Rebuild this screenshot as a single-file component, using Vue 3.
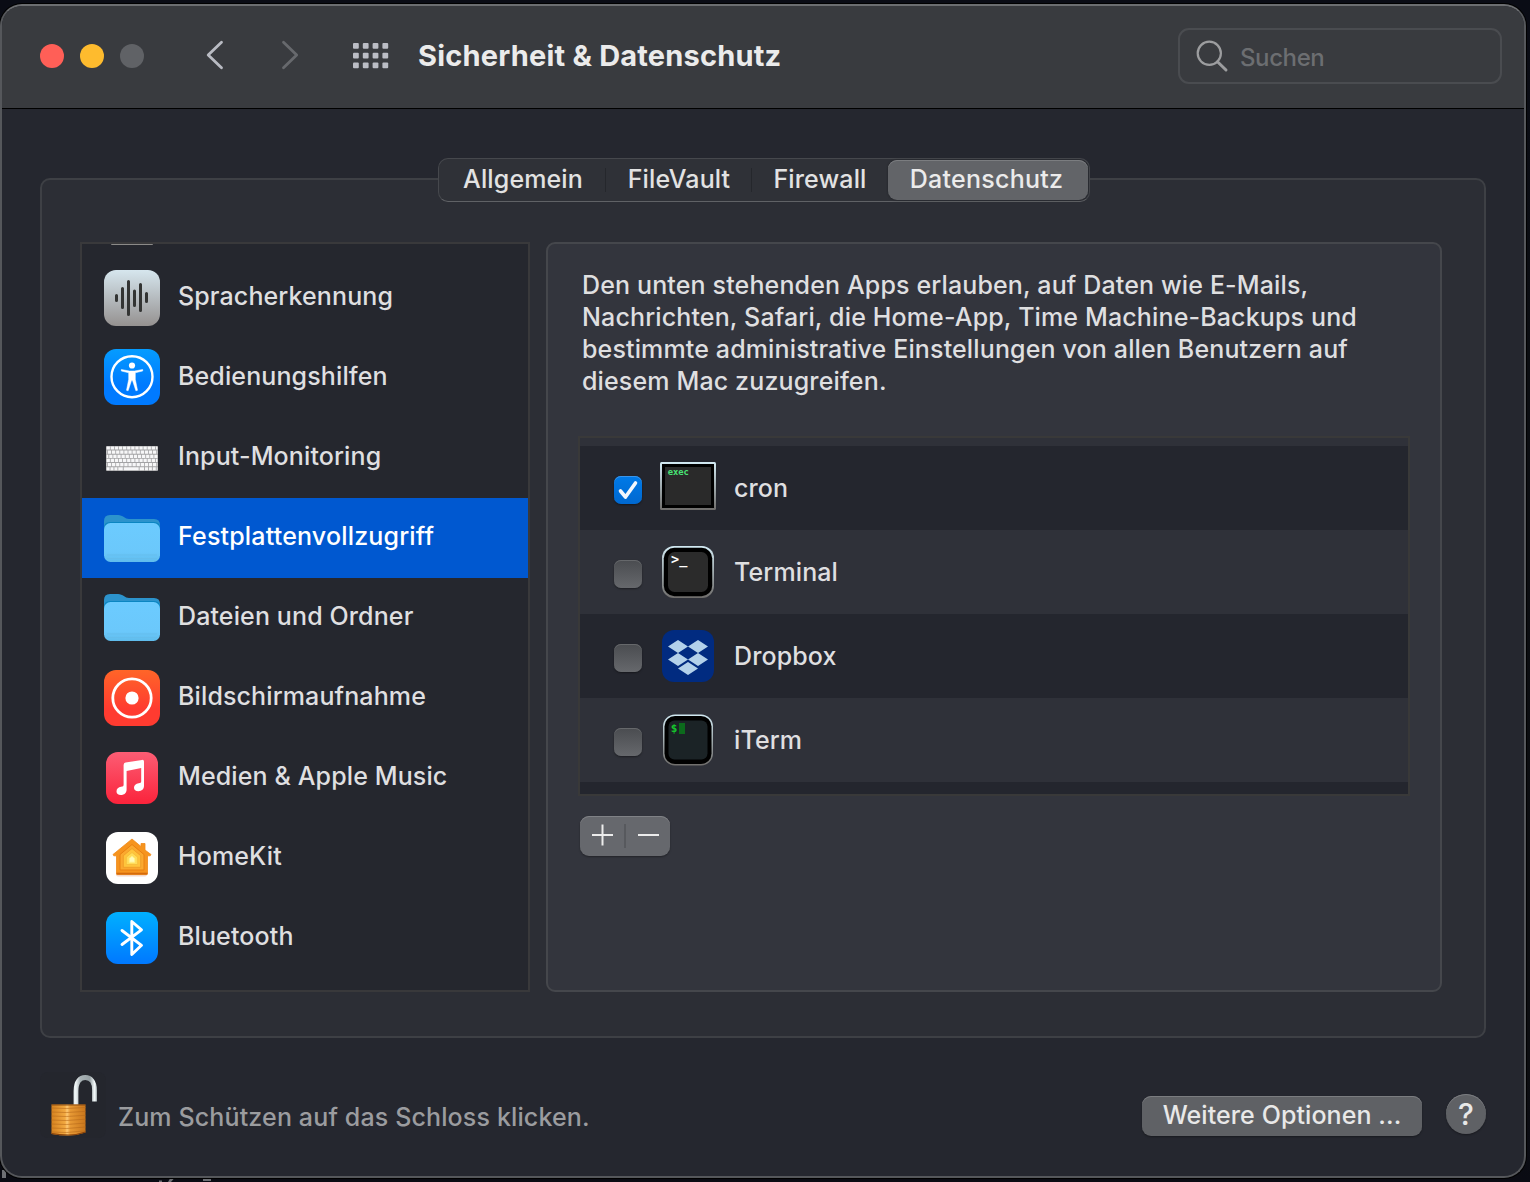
<script setup>
const tabs = [
  { label: 'Allgemein', cls: 'seg-a' },
  { label: 'FileVault', cls: 'seg-b' },
  { label: 'Firewall', cls: 'seg-c' },
  { label: 'Datenschutz', cls: 'seg-d' },
]

const categories = [
  { label: 'Spracherkennung', icon: 'speech' },
  { label: 'Bedienungshilfen', icon: 'access' },
  { label: 'Input-Monitoring', icon: 'keyboard' },
  { label: 'Festplattenvollzugriff', icon: 'folder', selected: true },
  { label: 'Dateien und Ordner', icon: 'folder' },
  { label: 'Bildschirmaufnahme', icon: 'record' },
  { label: 'Medien & Apple Music', icon: 'music' },
  { label: 'HomeKit', icon: 'home' },
  { label: 'Bluetooth', icon: 'bluetooth' },
]

const apps = [
  { label: 'cron', icon: 'cron', checked: true },
  { label: 'Terminal', icon: 'terminal' },
  { label: 'Dropbox', icon: 'dropbox' },
  { label: 'iTerm', icon: 'iterm' },
]

const keyRows = [0, 1, 2, 3, 4, 5]
const lockRibs = [0, 1, 2, 3, 4, 5, 6]
</script>

<template>
  <div class="desktop">
    <svg class="behind" width="240" height="14" viewBox="0 0 240 14" fill="#6d6f74">
      <rect x="2" y="2" width="4" height="8" />
      <path d="M159 12.5h3v1.5h-3zM170 10.5h4l-3 3.5h-3zM203 11h8v2h-8z" />
    </svg>
    <div class="window">
      <header class="toolbar">
        <div class="lights"><i class="red"></i><i class="yellow"></i><i class="gray"></i></div>
        <svg class="nav" width="100" height="32" viewBox="0 0 100 32" fill="none" stroke-width="2.8" stroke-linecap="round" stroke-linejoin="round">
          <path d="M17.500 3.200 4.200 16l13.300 12.800" stroke="#b9bbc3" />
          <path d="M79.500 3.200l13.200 12.800-13.200 12.800" stroke="#67696d" />
        </svg>
        <svg class="dots" width="36" height="26" viewBox="0 0 36 26" fill="#bbbdc5">
          <template v-for="r in 3" :key="r">
            <rect v-for="c in 4" :key="c" :x="(c - 1) * 9.8" :y="(r - 1) * 9.7" width="5.8" height="5.800" rx="1" />
          </template>
        </svg>
        <h1>Sicherheit &amp; Datenschutz</h1>
        <div class="search">
          <svg width="34" height="34" viewBox="0 0 34 34" fill="none" stroke="#9c9d9f">
            <circle cx="14.300" cy="14.300" r="11.600" stroke-width="2.200" />
            <path d="M22.500 22.700 31 31" stroke-width="3" stroke-linecap="round" />
          </svg>
          <span>Suchen</span>
        </div>
      </header>

      <main>
        <nav class="tabs">
          <button v-for="t in tabs" :key="t.label" :class="t.cls">{{ t.label }}</button>
        </nav>

        <section class="group">
          <ul class="sidebar">
            <li class="peek"><i></i></li>
            <li v-for="c in categories" :key="c.label" :class="{ selected: c.selected }">
              <svg width="56" height="80" viewBox="0 0 56 80">
                <g v-if="c.icon === 'speech'">
                  <rect y="12" width="56" height="56" rx="12" fill="url(#gSpeech)" />
                  <path d="M12.500 37.500v5M18.500 30.500v19M24.500 23.500v33M30.500 33v14.500M36.500 26.500v26M42.500 35.500v8" stroke="#333433" stroke-width="3" stroke-linecap="round" />
                </g>
                <g v-else-if="c.icon === 'access'">
                  <rect y="11" width="56" height="56" rx="12" fill="url(#gBlue)" />
                  <circle cx="28" cy="38.700" r="20.500" fill="none" stroke="#fff" stroke-width="2.400" />
                  <circle cx="28" cy="27.500" r="3.100" fill="#fff" />
                  <path d="M17.300 31.500 25.500 33h5l8.200-1.500v1.500L31.300 34.800v6.500l2.200 11-1.600.5-3.400-10.300h-1l-3.400 10.300-1.600-.5 2.200-11v-6.500L17.300 33z" fill="#fff" stroke="#fff" stroke-width=".5" stroke-linejoin="round" />
                </g>
                <g v-else-if="c.icon === 'keyboard'">
                  <rect x="2" y="28" width="52" height="25" rx="1" fill="#a3a3a5" />
                  <g stroke="#f7f7f8" stroke-width="3.200">
                    <path
                      v-for="r in keyRows"
                      :key="r"
                      :d="`M2.600 ${30 + r * 4.150}H53.500`"
                      :stroke-dasharray="r === 5 ? '3 .9 3 .9 3 .9 4.500 .9 15 .9 4.500 .9 3 .9 3 .9 3 .9' : '3.300 .8'"
                      :stroke-dashoffset="r === 5 ? 0 : -(r % 3) * 1.300"
                    />
                  </g>
                </g>
                <g v-else-if="c.icon === 'folder'">
                  <g :transform="c.selected ? 'translate(0 1)' : ''">
                    <path d="M0 30V22q0-6 6-6h8c5 0 7 4 11 4h25q6 0 6 6v4H0z" fill="#2c93cc" />
                    <path d="M0 29q0-6 6-6h44q6 0 6 6v4H0z" fill="#0c86c2" />
                    <rect y="24" width="56" height="39" rx="6.500" fill="url(#gFolder)" />
                    <path d="M3 56h50M3 59.500h50" stroke="#64bbe9" stroke-width=".7" />
                  </g>
                </g>
                <g v-else-if="c.icon === 'record'">
                  <rect y="12" width="56" height="56" rx="12" fill="url(#gRecord)" />
                  <circle cx="28" cy="40" r="19.200" fill="none" stroke="#fff" stroke-width="2.800" />
                  <circle cx="28" cy="40" r="6.600" fill="#fff" />
                </g>
                <g v-else-if="c.icon === 'music'">
                  <rect x="2" y="14" width="52" height="52" rx="12" fill="url(#gMusic)" />
                  <path d="M19.600 27q0-2 2-2.400L38 21.900q2-.3 2 1.600v24.300c0 3.400-2.200 5.400-5.700 5.400-2.700 0-4.300-1.400-4.300-3.500 0-2.600 2-4.100 4.600-4.500 2-.3 2.600-.6 2.600-2V30l-14.600 2.900v18.600c0 3.400-2.200 5.500-5.800 5.500-2.700 0-4.300-1.500-4.300-3.600 0-2.600 2-4.200 4.500-4.600 2-.3 2.600-.6 2.600-2z" fill="#fff" />
                </g>
                <g v-else-if="c.icon === 'home'">
                  <rect x="2" y="14" width="52" height="52" rx="12" fill="#fff" />
                  <rect x="12" y="54" width="31" height="4.500" rx="2" fill="#f3d9cc" />
                  <path d="M9 36.500 28 21l9 7.500V25.500h4v6.500L47 36.500l-.8 1.300H43.500V55.500q0 1-1 1H13.500q-1 0-1-1V37.800H9.800z" fill="#f6941e" stroke="#f08a1a" stroke-width=".8" stroke-linejoin="round" />
                  <path d="M12.500 55.600h31" stroke="#d56a0c" stroke-width="1.800" />
                  <path d="M16 36.500 28 26.500l12 10V52H16z" fill="#fba92f" stroke="#e88012" />
                  <path d="M19.300 37.700l8.700-7.200 8.700 7.200v11.600H19.300z" fill="#ffc53c" stroke="#ee9c28" stroke-width=".9" />
                  <path d="M22.300 39.200l5.700-4.700 5.700 4.700v7.300H22.300z" fill="#ffdd5a" stroke="#f5bb3b" stroke-width=".8" />
                  <path d="M25.300 40.500l2.700-2.300 2.700 2.300v3.700h-5.400z" fill="#fffbb8" stroke="#fff08a" />
                </g>
                <g v-else>
                  <rect x="2" y="14" width="52" height="52" rx="12" fill="url(#gBt)" />
                  <path d="M18 32.500 37.500 47.300 27.800 56.500V23.500l9.700 8.300L18 46.500" fill="none" stroke="#fff" stroke-width="2.900" stroke-linecap="round" stroke-linejoin="round" />
                </g>
              </svg>
              <span>{{ c.label }}</span>
            </li>
          </ul>

          <div class="pane">
            <p>
              Den unten stehenden Apps erlauben, auf Daten wie E-Mails,<br />
              Nachrichten, Safari, die Home-App, Time Machine-Backups und<br />
              bestimmte administrative Einstellungen von allen Benutzern auf<br />
              diesem Mac zuzugreifen.
            </p>

            <ul class="apps">
              <li v-for="a in apps" :key="a.label">
                <span class="check" :class="{ on: a.checked }">
                  <svg v-if="a.checked" width="28" height="28" viewBox="0 0 28 28" fill="none" stroke="#f2f7fd" stroke-width="3.600" stroke-linecap="round" stroke-linejoin="round">
                    <path d="M6.500 15l5 6L21.500 7" />
                  </svg>
                </span>
                <svg width="56" height="84" viewBox="0 0 56 84">
                  <g v-if="a.icon === 'cron'">
                    <rect y="16" width="56" height="48" rx="1.500" fill="url(#gFrame)" />
                    <rect x="2" y="18" width="52" height="44" fill="#000" />
                    <rect x="5" y="21" width="46" height="38" fill="#2a2a2a" />
                    <text x="7.700" y="28.800" font-size="8.800" fill="#48e475" class="mono bold">exec</text>
                  </g>
                  <g v-else-if="a.icon === 'terminal'">
                    <rect x="2" y="16" width="52" height="52" rx="12" fill="url(#gFrame)" />
                    <rect x="3.800" y="17.800" width="48.400" height="48.400" rx="10.500" fill="#000" />
                    <rect x="8" y="22" width="40" height="40" rx="6.500" fill="#2b2b2b" />
                    <text x="11" y="34" font-size="13.500" fill="#fff" class="mono bold">&gt;_</text>
                  </g>
                  <g v-else-if="a.icon === 'dropbox'">
                    <rect x="2" y="16" width="52" height="52" rx="12" fill="#012b80" />
                    <path d="M18 26l10 6.500L18 39 8 32.500zM38 26l10 6.500L38 39l-10-6.500zM18 39l10 6.500L18 52 8 45.500zM38 39l10 6.500L38 52l-10-6.500zM28 48l10 6.500L28 61l-10-6.500z" fill="#b3d1ea" />
                  </g>
                  <g v-else>
                    <rect x="3" y="16.500" width="50" height="51" rx="12" fill="url(#gFrame)" />
                    <rect x="4.500" y="18" width="47" height="48" rx="10.500" fill="#000" />
                    <rect x="8.500" y="22.500" width="39" height="39" rx="6" fill="#1b2326" />
                    <text x="10.700" y="34" font-size="11" fill="#15c42c" class="mono bold">$</text>
                    <rect x="19" y="25" width="6" height="11" fill="#0c6a1c" />
                  </g>
                </svg>
                <span class="name">{{ a.label }}</span>
              </li>
            </ul>

            <div class="plusminus">
              <svg width="90" height="40" viewBox="0 0 90 40">
                <path d="M45 8v24" stroke="#54565a" stroke-width="1.600" />
                <path d="M22.500 8.500V29.500M12 19h21M58 19h21" stroke="#ececec" stroke-width="2" />
              </svg>
            </div>
          </div>
        </section>
      </main>

      <footer>
        <svg class="lock" width="66" height="66" viewBox="0 0 66 66">
          <rect width="66" height="66" rx="8" fill="#24262d" />
          <path d="M36 33V19C36 9.500 40 5.500 45.300 5.500S54.500 10 54.500 18v11.500" fill="none" stroke="url(#gShackle)" stroke-width="4.800" />
          <path d="M11.500 32.500h34v28q-8 3-17 3-9 0-17-1.500z" fill="url(#gLock)" />
          <path v-for="r in lockRibs" :key="r" :d="`M11.500 ${36 + r * 4}l15 .500L45.500 ${35.500 + r * 3.900}`" fill="none" stroke="#b5691b" stroke-width="1" opacity=".6" />
          <path d="M11.500 33h34" stroke="#8d4c10" />
          <path d="M11.500 61.500q8 1.500 17 1.500 9 0 17-3" fill="none" stroke="#8a430a" stroke-width="1.200" />
        </svg>
        <span class="hint">Zum Schützen auf das Schloss klicken.</span>
        <button class="more">Weitere Optionen ...</button>
        <button class="help">?</button>
      </footer>
    </div>

    <svg class="defs" width="0" height="0">
      <defs>
        <linearGradient id="gSpeech" x2="0" y2="1"><stop stop-color="#d6e6ee" /><stop offset="1" stop-color="#959190" /></linearGradient>
        <linearGradient id="gBlue" x2="0" y2="1"><stop stop-color="#059cff" /><stop offset=".65" stop-color="#007aff" /><stop offset="1" stop-color="#007aff" /></linearGradient>
        <linearGradient id="gFolder" x2="0" y2="1"><stop stop-color="#6ccbff" /><stop offset=".75" stop-color="#6bc8fb" /><stop offset="1" stop-color="#5fbcec" /></linearGradient>
        <linearGradient id="gRecord" x2="0" y2="1"><stop stop-color="#ff6528" /><stop offset=".7" stop-color="#ff3b30" /><stop offset="1" stop-color="#ff3b30" /></linearGradient>
        <linearGradient id="gMusic" x2="0" y2="1"><stop stop-color="#fc5d74" /><stop offset="1" stop-color="#fb233b" /></linearGradient>
        <linearGradient id="gBt" x2="0" y2="1"><stop stop-color="#00b0ff" /><stop offset="1" stop-color="#0078ff" /></linearGradient>
        <linearGradient id="gFrame" x2="0" y2="1"><stop stop-color="#d2eaf3" /><stop offset="1" stop-color="#6f6d6b" /></linearGradient>
        <linearGradient id="gLock"><stop stop-color="#d5821f" /><stop offset=".4" stop-color="#f2a941" /><stop offset=".46" stop-color="#fdc873" /><stop offset=".55" stop-color="#e89a35" /><stop offset="1" stop-color="#c9761b" /></linearGradient>
        <linearGradient id="gShackle" gradientUnits="userSpaceOnUse" x1="33" x2="57" y1="0" y2="0"><stop stop-color="#dfe8ea" /><stop offset=".12" stop-color="#f0f6f7" /><stop offset=".3" stop-color="#a9b3b6" /><stop offset=".7" stop-color="#97a1a4" /><stop offset=".9" stop-color="#f4fafb" /><stop offset="1" stop-color="#b4bec0" /></linearGradient>
      </defs>
    </svg>
  </div>
</template>

<style>
body {
  margin: 0;
  background: #0a0c13;
}
</style>

<style scoped>
* {
  box-sizing: border-box;
}
.desktop {
  position: relative;
  width: 1530px;
  height: 1182px;
  padding: 4px 4px 4px 0;
  overflow: hidden;
  background: linear-gradient(#0a0c15, #0b0d11 30%, #0c0d10 90%, #0a0b13);
  font-family: Inter, 'Liberation Sans', sans-serif;
  font-size: 25px;
  font-weight: 450;
  letter-spacing: 0.12px;
  color: #dfdfe0;
}
.behind {
  position: absolute;
  left: 0;
  top: 1168px;
}
.defs {
  position: absolute;
}
.window {
  position: relative;
  display: flex;
  flex-direction: column;
  width: 1526px;
  height: 1174px;
  border: 2px solid #55575b;
  border-top-color: #6c6e71;
  border-radius: 22px;
  background: #25272f;
  box-shadow: 0 0 0 1px #000;
  overflow: hidden;
}
.toolbar {
  flex: none;
  display: flex;
  align-items: center;
  height: 103px;
  padding: 0 22px 2px 38px;
  background: #393b3f;
  border-bottom: 1px solid #000;
}
.lights {
  display: flex;
  gap: 16px;
}
.lights i {
  width: 24px;
  height: 24px;
  border-radius: 50%;
}
.red {
  background: #ff5f57;
}
.yellow {
  background: #febb2e;
}
.gray {
  background: #606266;
}
.nav {
  margin-left: 60px;
  margin-top: -2px;
}
.dots {
  margin-left: 49px;
  margin-top: -1px;
}
h1 {
  margin: 0 0 1px 29px;
  font-size: 29px;
  line-height: 40px;
  font-weight: 650;
  letter-spacing: 0.2px;
  color: #ebebeb;
}
.search {
  display: flex;
  align-items: center;
  width: 324px;
  height: 56px;
  margin-left: auto;
  padding-left: 15px;
  border: 2px solid #4a4c50;
  border-radius: 11px;
}
.search svg {
  margin-top: -1px;
}
.search span {
  margin-left: 11px;
  padding-top: 2px;
  font-size: 24px;
  letter-spacing: -0.4px;
  color: #6c6e71;
}
main {
  flex: none;
  display: flex;
  flex-direction: column;
  align-items: center;
  padding: 49px 38px 0;
}
.tabs {
  position: relative;
  z-index: 1;
  display: flex;
  width: 652px;
  height: 44px;
  margin-left: 1px;
  padding: 1px;
  border: 1px solid #46484d;
  border-bottom-color: #606266;
  border-radius: 10px;
  background: #2f3137;
}
button {
  display: block;
  height: 40px;
  margin: 0;
  padding: 0 0 2px;
  border: 0;
  border-radius: 9px;
  background: none;
  color: #e2e2e2;
  font: inherit;
  letter-spacing: inherit;
  line-height: 38px;
  text-align: center;
  white-space: nowrap;
}
.seg-a {
  width: 166px;
  padding-left: 1px;
}
.seg-b {
  width: 146px;
  padding-left: 1px;
}
.seg-c {
  width: 136px;
  padding-left: 1px;
}
.seg-d {
  width: 200px;
  padding-right: 2px;
  background: #626468;
  box-shadow: inset 0 1px #7b7d80, 0 0 2px #1c1e22;
  color: #ebebeb;
  letter-spacing: 0.25px;
}
.seg-a,
.seg-b {
  border-radius: 0;
  background: linear-gradient(#25272c, #25272c) right center / 1px 24px no-repeat;
}
.group {
  display: flex;
  gap: 16px;
  width: 1446px;
  height: 860px;
  margin-top: -24px;
  padding: 62px 38px 0;
  border: 2px solid #3e4045;
  border-radius: 10px;
  background: #2c2e35;
}
ul {
  margin: 0;
  padding: 0;
  list-style: none;
}
.sidebar {
  width: 450px;
  height: 750px;
  border: 2px solid #39393b;
  background: #25272e;
  overflow: hidden;
}
.sidebar li {
  display: flex;
  align-items: center;
  height: 80px;
  padding-left: 22px;
}
.sidebar span {
  margin-left: 18px;
  padding-bottom: 4px;
}
.sidebar .selected {
  background: #0058d0;
  color: #fff;
  font-weight: 500;
  letter-spacing: 0.18px;
}
.sidebar .peek {
  align-items: flex-start;
  height: 14px;
}
.peek i {
  width: 42px;
  height: 1px;
  margin-left: 7px;
  border-radius: 0 0 4px 4px;
  background: #8b8a88;
}
.pane {
  width: 896px;
  height: 750px;
  padding: 25px 30px 0 30px;
  border: 2px solid #45474c;
  border-radius: 9px;
  background: #33353d;
}
p {
  margin: 0 0 0 4px;
  height: 128px;
  line-height: 32px;
  letter-spacing: 0.14px;
  white-space: nowrap;
}
.apps {
  width: 832px;
  height: 360px;
  margin-top: 39px;
  padding-top: 8px;
  border: 2px solid #393939;
  background: linear-gradient(#2f3139 0 8px, #24262e 8px);
}
.apps li {
  display: flex;
  align-items: center;
  height: 84px;
  padding-left: 34px;
  background: #24262e;
}
.apps li:nth-child(even) {
  background: #2f3139;
}
.check {
  width: 28px;
  height: 28px;
  margin: 4px 18px 0 0;
  border-radius: 7px;
  background: linear-gradient(#4a4c50, #66686c);
  box-shadow: inset 0 1px #66686b, 0 1px 2px rgba(0, 0, 0, 0.4);
}
.check.on {
  background: linear-gradient(#007ae8, #0068d0);
  box-shadow: inset 0 1px #3a95ea, 0 1px 2px rgba(0, 0, 0, 0.4);
}
.check svg {
  display: block;
}
.name {
  margin-left: 18px;
}
.mono {
  font-family: 'DejaVu Sans Mono', monospace;
  letter-spacing: 0;
}
.bold {
  font-weight: 700;
}
.plusminus {
  width: 90px;
  height: 40px;
  margin: 20px 0 0 2px;
  border-radius: 9px;
  background: #66686d;
  box-shadow: inset 0 1px #808286, 0 1px 2px rgba(0, 0, 0, 0.35);
}
.plusminus svg {
  display: block;
}
footer {
  flex: none;
  display: flex;
  align-items: flex-start;
  padding: 34px 38px 0;
}
.lock {
  flex: none;
}
.hint {
  margin: 29px 0 0 12px;
  line-height: 32px;
  letter-spacing: 0.14px;
  color: #9b9c9f;
}
.more {
  width: 280px;
  margin: 24px 24px 0 auto;
  background: #5f6165;
  box-shadow: inset 0 1px #7b7d80, 0 1px 2px rgba(0, 0, 0, 0.35);
  color: #e8e8e8;
  letter-spacing: 0.08px;
}
.help {
  width: 40px;
  height: 40px;
  margin-top: 22px;
  padding: 0;
  border-radius: 50%;
  background: #5f6165;
  box-shadow: inset 0 1px #7b7d80, 0 1px 2px rgba(0, 0, 0, 0.35);
  color: #e8e8e8;
  font-size: 30px;
  line-height: 41px;
}
</style>
